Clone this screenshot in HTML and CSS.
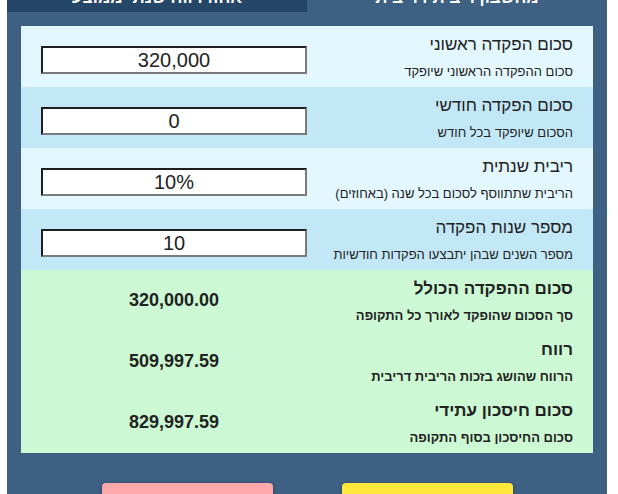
FILE: index.html
```html
<!DOCTYPE html>
<html lang="he" dir="rtl">
<head>
  <meta charset="UTF-8">
  <meta name="viewport" content="width=device-width, initial-scale=1.0">
  <title>מחשבון ריבית דריבית</title>
  <link rel="stylesheet" href="styles.css">
</head>
<body>
  <div class="calculator">
    <div class="tabs">
      <div class="tab active">מחשבון ריבית דריבית</div>
      <div class="tab">אחוז רווח שנתי ממוצע</div>
    </div>

    <div class="panel">
      <div class="field light">
        <div class="label">
          <h3>סכום הפקדה ראשוני</h3>
          <p>סכום ההפקדה הראשוני שיופקד</p>
        </div>
        <div class="control"><input type="text" id="initial" value="320,000"></div>
      </div>
      <div class="field dark">
        <div class="label">
          <h3>סכום הפקדה חודשי</h3>
          <p>הסכום שיופקד בכל חודש</p>
        </div>
        <div class="control"><input type="text" id="monthly" value="0"></div>
      </div>
      <div class="field light">
        <div class="label">
          <h3>ריבית שנתית</h3>
          <p>הריבית שתתווסף לסכום בכל שנה (באחוזים)</p>
        </div>
        <div class="control"><input type="text" id="rate" value="10%"></div>
      </div>
      <div class="field dark">
        <div class="label">
          <h3>מספר שנות הפקדה</h3>
          <p>מספר השנים שבהן יתבצעו הפקדות חודשיות</p>
        </div>
        <div class="control"><input type="text" id="years" value="10"></div>
      </div>

      <div class="results">
        <div class="field">
          <div class="label">
            <h3>סכום ההפקדה הכולל</h3>
            <p>סך הסכום שהופקד לאורך כל התקופה</p>
          </div>
          <div class="value" id="totalDeposit">320,000.00</div>
        </div>
        <div class="field">
          <div class="label">
            <h3>רווח</h3>
            <p>הרווח שהושג בזכות הריבית דריבית</p>
          </div>
          <div class="value" id="profit">509,997.59</div>
        </div>
        <div class="field">
          <div class="label">
            <h3>סכום חיסכון עתידי</h3>
            <p>סכום החיסכון בסוף התקופה</p>
          </div>
          <div class="value" id="futureValue">829,997.59</div>
        </div>
      </div>
    </div>

    <div class="actions">
      <button class="btn calc-btn">חשב</button>
      <button class="btn reset-btn">איפוס</button>
    </div>
  </div>
</body>
</html>
```

FILE: styles.css
```css
body {
  margin: 0;
  background: #fff;
  font-family: "Liberation Sans", Arial, sans-serif;
  color: #222;
  overflow: hidden;
}
.calculator {
  width: 600px;
  margin: -25px auto 0 7px;
  background: #3d6083;
}
.tabs {
  display: flex;
}
.tab {
  flex: 1;
  padding: 12px 0 3px;
  line-height: 22px;
  font-size: 17px;
  font-weight: bold;
  color: #fff;
  text-align: center;
  background: #264668;
}
.tab.active {
  background: #3d6083;
}
.panel {
  margin: 14px 14px 0;
}
.field {
  display: flex;
  align-items: center;
  padding: 0 20px;
}
.field.light {
  background: #e3f7fe;
}
.field.dark {
  background: #c2e8f7;
}
.label {
  width: 50%;
  padding: 8px 0 6px;
}
.label h3 {
  margin: 0;
  font-size: 17px;
  line-height: 22px;
  font-weight: normal;
}
.label p {
  margin: 7px 0 0;
  font-size: 13px;
  line-height: 18px;
}
.control {
  width: 50%;
  margin-top: 7px;
}
.control input {
  display: block;
  box-sizing: border-box;
  width: 100%;
  height: 28px;
  padding: 0;
  border: 2px solid;
  border-color: #1e1e1e #7a7a7a #7a7a7a #1e1e1e;
  background: #fff;
  font-family: "Liberation Sans", Arial, sans-serif;
  font-size: 20px;
  color: #222;
  text-align: center;
}
.results {
  background: #ccf9d3;
}
.results .label h3 {
  font-weight: bold;
}
.results .label p {
  font-weight: bold;
}
.value {
  width: 50%;
  text-align: center;
  font-size: 18px;
  font-weight: bold;
}
.actions {
  display: flex;
  justify-content: center;
  gap: 69px;
  padding: 30px 0 20px;
}
.btn {
  width: 171px;
  padding: 14px 0;
  border: none;
  border-radius: 4px;
  font-family: "Liberation Sans", Arial, sans-serif;
  font-size: 17px;
  font-weight: bold;
  color: #222;
  cursor: pointer;
  box-shadow: 0 1px 4px rgba(0, 0, 0, 0.3);
}
.calc-btn {
  background: #ffe83b;
}
.reset-btn {
  background: #ffa8ab;
}
```
